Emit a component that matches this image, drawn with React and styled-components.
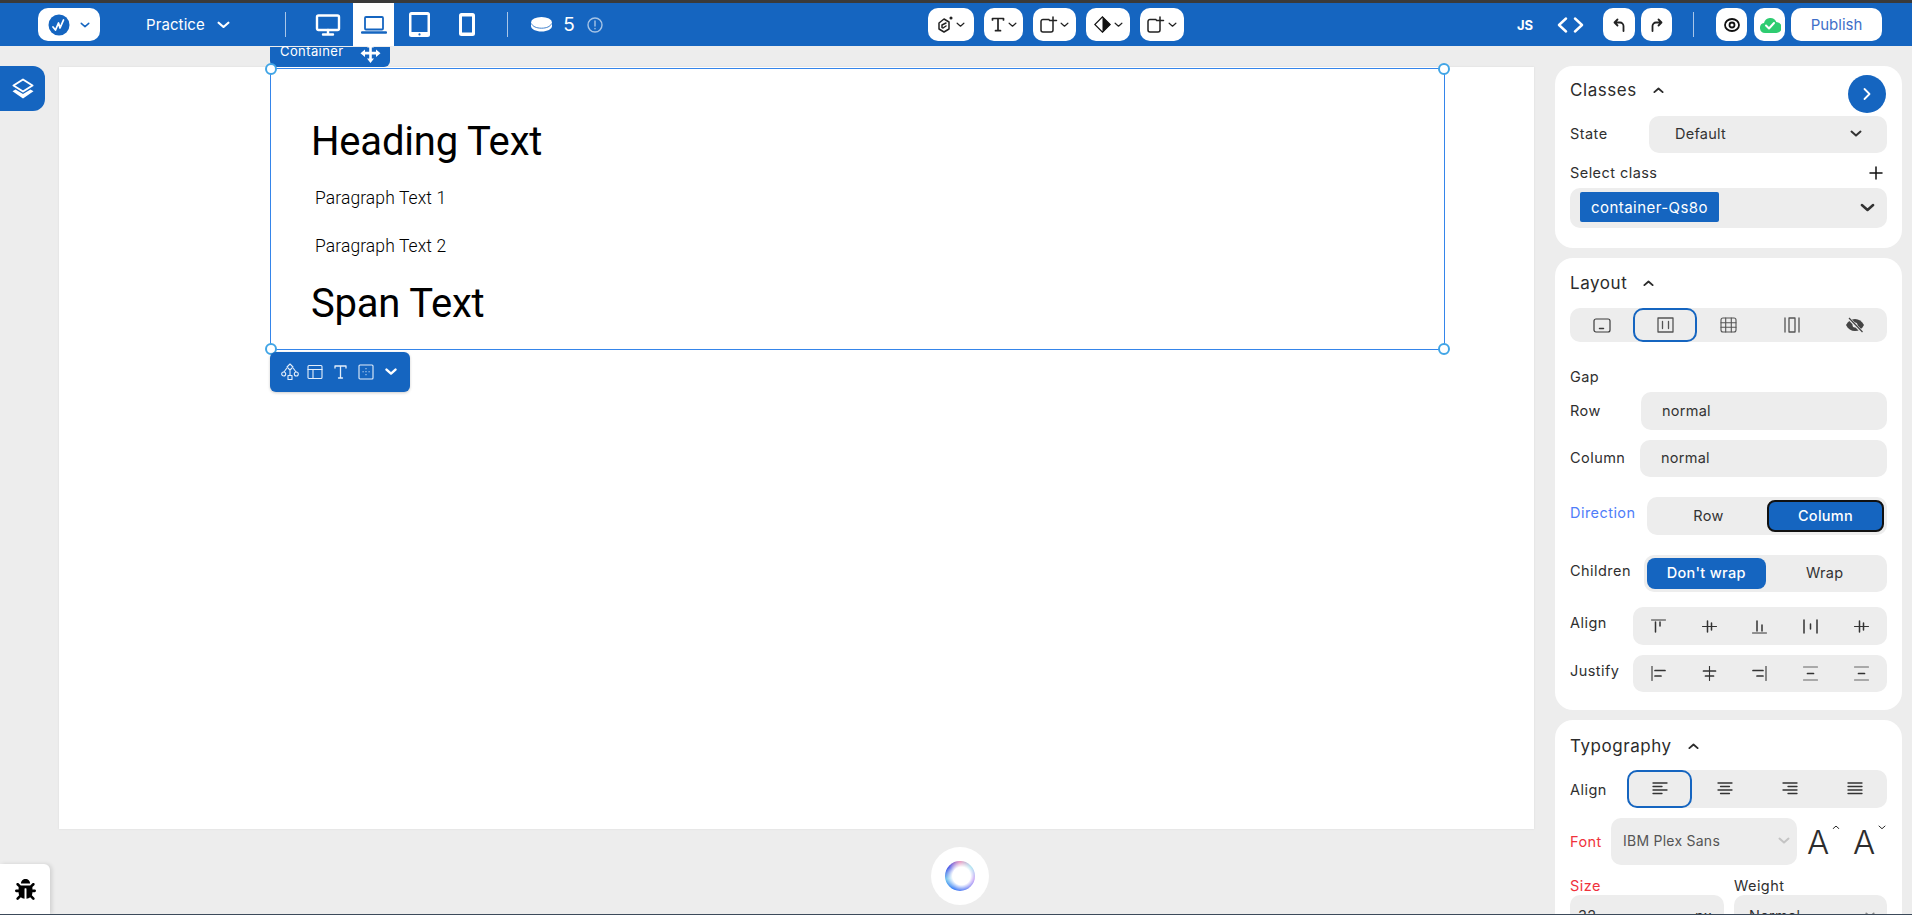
import React from 'react';
import styled, { createGlobalStyle } from 'styled-components';
import { FaBug } from 'react-icons/fa';

const BLUE = '#1565c0';
const UI = '"Inter", "Noto Sans", sans-serif';
const PLEX = '"Roboto", "Noto Sans", sans-serif';

const Global = createGlobalStyle`
  html, body { margin: 0; padding: 0; background: #ededed; overflow: hidden; height: 915px; }
  * { box-sizing: border-box; }
`;

const Page = styled.div`
  width: 1912px; height: 915px; overflow: hidden; position: relative;
  display: flex; flex-direction: column;
  background: #ededed; font-family: ${UI}; color: #2b2b2b;
  border-top: 3px solid #3a3a3a; border-bottom: 1px solid #3c4a5a;
`;
const TopBar = styled.header`
  height: 43px; flex: none; background: ${BLUE}; display: flex; align-items: center;
  padding-left: 38px; position: relative; z-index: 2;
`;
const Spot = styled.div`
  margin-left: ${p => p.$ml || 0}px; flex: none; display: flex; align-items: center; justify-content: center;
  width: ${p => p.$w}px; height: ${p => p.$h || 33}px; gap: ${p => p.$gap || 0}px;
  background: ${p => p.$plain ? 'transparent' : '#fff'};
  border-radius: ${p => p.$plain ? 0 : 10}px;
  color: ${p => p.$plain ? '#fff' : '#1c1c1c'};
`;
const PracticeMenu = styled(Spot)`
  justify-content: flex-start;
`;
const DeviceActive = styled.div`
  margin-left: ${p => p.$ml}px; width: 41px; height: 43px; background: #fff; flex: none;
  display: flex; align-items: center; justify-content: center;
`;
const Divider = styled.div`
  width: 1px; height: 25px; background: #a9c6e8; flex: none; margin-left: ${p => p.$ml}px;
`;
const BarText = styled.span`
  font-size: ${p => p.$s || 15}px; font-weight: ${p => p.$w || 400}; color: #fff; white-space: nowrap;
  letter-spacing: ${p => p.$ls || 0}px;
`;
const PublishButton = styled.button`
  margin-left: 6px; width: 91px; height: 33px; border: 0; border-radius: 10px; background: #fff;
  color: #3f6fc9; font: 400 15px ${UI}; padding: 0; flex: none;
`;

const Main = styled.main`
  flex: 1; min-height: 0; display: flex; position: relative;
`;
const Rail = styled.div`
  width: 59px; flex: none; padding-top: 20px; display: flex; flex-direction: column;
`;
const LayersButton = styled.button`
  width: 45px; height: 45px; border: 0; padding: 0; background: ${BLUE}; border-radius: 0 12px 12px 0;
  display: flex; align-items: center; justify-content: center;
`;
const BugButton = styled.div`
  position: absolute; left: 0; bottom: 0; width: 50px; height: 50px; background: #fff;
  border-radius: 0 6px 0 0; display: flex; align-items: center; justify-content: center;
  box-shadow: 2px 0 4px rgba(0,0,0,.12); color: #000; font-size: 21px;
`;
const Stage = styled.div`
  width: 1475px; flex: none; padding-top: 21px;
`;
const Canvas = styled.section`
  height: 762px; background: #fff; padding: 1px 0 0 211px; box-shadow: 0 0 2px rgba(0,0,0,.08);
`;
const Selection = styled.div`
  width: 1175px; height: 282px; border: 1px solid #3585ea; position: relative;
  padding: 47px 0 0 40px; color: #000; font-family: ${PLEX};
`;
const Heading = styled.div`
  font-size: 40px; line-height: 52px; letter-spacing: -.2px; white-space: nowrap;
  margin-top: ${p => p.$mt || 0}px;
`;
const Para = styled.p`
  margin: ${p => p.$mt}px 0 0 4px; font-size: 17.5px; font-weight: 300; letter-spacing: .1px; line-height: 24px; white-space: nowrap; color: #000;
`;
const Handle = styled.span`
  position: absolute; width: 12px; height: 12px; border-radius: 50%; background: #fff;
  border: 2px solid #41a5e6;
  ${p => p.$r ? 'right: -6px;' : 'left: -6px;'}
  ${p => p.$b ? 'bottom: -6px;' : 'top: -6px;'}
`;
const NameTag = styled.div`
  position: absolute; left: -1px; top: -22px; width: 120px; height: 20px; background: ${BLUE};
  border-radius: 0 0 6px 6px; display: flex; align-items: center; justify-content: space-between;
  padding: 0 9px 8px 10px; color: #fff; font: 400 13px ${UI}; letter-spacing: .4px;
`;
const TagText = styled.span`
  margin-top: -4px;
`;
const ElementBar = styled.div`
  position: absolute; left: -1px; top: 283px; width: 140px; height: 40px; background: ${BLUE};
  border-radius: 6px; display: flex; align-items: center; gap: 11px; padding-left: 11px;
  box-shadow: 0 1px 3px rgba(0,0,0,.2);
`;
const TreeSlot = styled.span`
  display: flex; margin-right: -3px;
`;
const BarChevron = styled.span`
  color: #fff; display: flex;
`;
const Orb = styled.div`
  position: absolute; left: 931px; bottom: 9px; width: 58px; height: 58px; border-radius: 50%; background: #fff;
  display: flex; align-items: center; justify-content: center;
  &::after {
    content: ''; width: 30px; height: 30px; border-radius: 50%;
    background: radial-gradient(circle at 55% 50%, #fff 0 40%, rgba(255,255,255,0) 72%),
      conic-gradient(#e27fb0, #7fd6ea, #a86ff0, #3f5ff0, #1f6cf5, #6fc2ee, #3d4be6, #e27fb0);
    filter: blur(.5px);
  }
`;

const Panel = styled.aside`
  margin-left: 21px; width: 347px; flex: none; padding-top: 20px; display: flex; flex-direction: column; gap: 10px;
`;
const Card = styled.div`
  background: #fff; border-radius: 18px; padding: ${p => p.$pt}px 15px ${p => p.$pb || 0}px; position: relative; flex: none;
`;
const Title = styled.div`
  height: 30px; display: flex; align-items: center; gap: ${p => p.$gap}px;
  font-size: 17px; font-weight: 400; color: #2c2c2c; letter-spacing: .55px;
`;
const NextButton = styled.div`
  position: absolute; right: 16px; top: 9px; width: 38px; height: 38px; border-radius: 50%; background: ${BLUE};
  display: flex; align-items: center; justify-content: center;
`;
const Row = styled.div`
  display: flex; align-items: center; justify-content: space-between;
  margin-top: ${p => p.$mt}px; height: ${p => p.$h}px;
`;
const Label = styled.span`
  font-size: 14.5px; letter-spacing: .45px; white-space: nowrap; color: ${p => p.$c || '#2f2f2f'};
  padding-bottom: ${p => p.$pb ?? 2}px;
`;
const Field = styled.div`
  width: ${p => p.$w ? p.$w + 'px' : '100%'}; height: 100%; background: #ededed; border-radius: 10px; flex: none;
  display: flex; align-items: center; justify-content: space-between;
  padding: 0 ${p => p.$pr ?? 21}px 2px ${p => p.$pl ?? 21}px; font-size: ${p => p.$fs || 14.5}px; letter-spacing: .25px; color: ${p => p.$c || '#333'};
`;
const ClassTag = styled.span`
  height: 30px; width: 139px; background: ${BLUE}; color: #fff; border-radius: 2px; font-size: 15px; letter-spacing: .45px;
  display: flex; align-items: center; justify-content: center; flex: none;
`;
const Segment = styled.div`
  width: ${p => p.$w ? p.$w + 'px' : '100%'}; height: 100%; background: #ededed; border-radius: 10px; flex: none;
  display: grid; grid-template-columns: repeat(${p => p.$n}, 1fr); align-items: center; justify-items: center;
  padding: ${p => p.$pad || 0}px;
`;
const IconCell = styled.div`
  width: 100%; height: 100%; display: flex; align-items: center; justify-content: center;
  border-radius: 10px; color: #3a3a3a;
  border: ${p => p.$on ? `2px solid ${BLUE}` : '0'};
`;
const Toggle = styled.div`
  width: 100%; height: 100%; display: flex; align-items: center; justify-content: center; font-size: 14.5px;
  letter-spacing: .3px; padding-bottom: 2px;
  border-radius: 8px; color: ${p => p.$on ? '#fff' : '#333'}; font-weight: ${p => p.$on ? 500 : 400};
  background: ${p => p.$on ? BLUE : 'transparent'};
  border: ${p => p.$ring ? '2px solid #111' : '0'};
`;
const SizeStep = styled.span`
  width: 31px; flex: none; display: flex; align-items: flex-start; gap: 3px; font-size: 33px; line-height: 38px; color: #2d2d2d; font-weight: 300;
`;
const CaretSlot = styled.span`
  display: flex; margin-top: 2px;
`;
const FontGroup = styled.div`
  display: flex; gap: 15px; margin: 0 3px 0 10px;
`;
const FontLabelGap = styled.span`
  flex: 1;
`;
const Two = styled.div`
  display: grid; grid-template-columns: 154px 153px; column-gap: 10px; margin-top: ${p => p.$mt || 0}px;
  height: ${p => p.$h}px; align-items: center;
`;
const PlusSlot = styled.span`
  display: flex; margin-right: 4px;
`;

const S = ({ w, h, vb, sw = 1.6, children, fill = 'none', c = 'currentColor' }) => (
  <svg width={w} height={h || w} viewBox={vb || `0 0 ${w} ${h || w}`} fill={fill} stroke={c} strokeWidth={sw} strokeLinecap="round" strokeLinejoin="round">{children}</svg>
);
const Chev = ({ up, w = 12, c = 'currentColor', sw = 2 }) => (
  <S w={w} h={w * .6} vb="0 0 12 7" sw={sw} c={c}><path d={up ? 'M1.5 5.5 6 1.5l4.5 4' : 'M1.5 1.5 6 5.5l4.5-4'} /></S>
);

const Monitor = () => <S w={26} h={22} sw={2.4} c="#fff"><rect x="2" y="1.5" width="22" height="14.5" rx="1.5" /><path d="M13 16v4M8 20.5h10" /></S>;
const Laptop = () => <S w={26} h={20} sw={1.8} c={BLUE}><rect x="4" y="2" width="18" height="12.5" rx="1" /><path d="M1 17.5h24" strokeWidth="2.4" /></S>;
const Tablet = () => <svg width="21" height="25" viewBox="0 0 21 25"><rect width="21" height="25" rx="2.5" fill="#fff" /><rect x="2.5" y="3" width="16" height="17" fill={BLUE} /><circle cx="10.5" cy="22.4" r="1.1" fill={BLUE} /></svg>;
const Phone = () => <svg width="16" height="23" viewBox="0 0 16 23"><rect width="16" height="23" rx="2.5" fill="#fff" /><rect x="3" y="3.5" width="10" height="16" fill={BLUE} /></svg>;
const Disk = () => <svg width="21" height="15" viewBox="0 0 21 15"><path d="M0 6v3c0 3 4.700 5.500 10.500 5.500S21 12 21 9V6z" fill="#fff" /><ellipse cx="10.500" cy="5.500" rx="10.500" ry="5.500" fill="#fff" /><path d="M.5 6.500c1 3 5 4.700 10 4.700s9-1.700 10-4.700" fill="none" stroke={BLUE} strokeWidth=".8" /></svg>;
const Info = () => <S w={16} sw={1.4} c="#a6c4e6"><circle cx="8" cy="8" r="7" /><path d="M8 4v5M8 11.500v.3" /></S>;

const Logo = () => (
  <svg width="22" height="22" viewBox="0 0 22 22"><circle cx="11" cy="11" r="10.500" fill={BLUE} /><path d="M5 13l2.500 3 3-7 1.500 5 3.500-8" fill="none" stroke="#fff" strokeWidth="1.800" strokeLinecap="round" strokeLinejoin="round" /></svg>
);
const Hex = () => <S w={16} h={17} sw={1.5} c="#222"><path d="M7 3l5 3v7l-5 3-5-3V7z" /><path d="M9 7L5 9v2.500M9 10l-3 2" /><circle cx="14" cy="2" r=".8" fill="#222" /></S>;
const TIcon = () => <S w={14} h={15} sw={1.7} c="#222"><path d="M1.500 3V1.500h11V3M7 1.500v12M4.500 13.700h5" /></S>;
const BoxPlus = () => <S w={18} h={17} sw={1.5} c="#222"><path d="M9 3.500H3a2 2 0 0 0-2 2V14a2 2 0 0 0 2 2h8a2 2 0 0 0 2-2V8M13 1v7M9.500 4.500h7" /></S>;
const Diamond = () => <svg width="17" height="17" viewBox="0 0 17 17"><path d="M8.500.8 16.200 8.500 8.500 16.200.8 8.500z" fill="#fff" stroke="#111" strokeWidth="1.200" /><path d="M8.500.8 16.200 8.500 8.500 16.200z" fill="#111" /></svg>;
const Undo = () => <S w={12} h={14} sw={1.800} c="#222"><path d="M4.500 1.500 1.500 4.500l3 3M1.500 4.500H7a3.500 3.500 0 0 1 3.500 3.500V13" /></S>;
const Redo = () => <S w={12} h={14} sw={1.800} c="#222"><path d="M7.500 1.500l3 3-3 3M10.500 4.500H5A3.500 3.500 0 0 0 1.500 8V13" /></S>;
const Eye = () => <svg width="16" height="14" viewBox="0 0 16 14" fill="none" stroke="#111"><ellipse cx="8" cy="7" rx="7" ry="6" strokeWidth="1.800" /><circle cx="8" cy="7" r="2.500" strokeWidth="1.800" /></svg>;
const Cloud = () => <svg width="22" height="16" viewBox="0 0 22 16"><path d="M6 16a5 5 0 0 1-1-9.900A6.500 6.500 0 0 1 17.300 5 5.500 5.500 0 0 1 17 16z" fill="#2ecc71" /><path d="M7 8.500l3 3 5-5.500" fill="none" stroke="#fff" strokeWidth="2" strokeLinecap="round" strokeLinejoin="round" /></svg>;
const Code = () => <S w={27} h={16} sw={2.400} c="#fff"><path d="M9 1.500 2 8l7 6.500M18 1.500 25 8l-7 6.500" /></S>;
const Layers = () => <svg width="22" height="21" viewBox="0 0 22 21"><path d="M11 1.500 20.500 7.500 11 13.500 1.500 7.500z" fill="none" stroke="#fff" strokeWidth="2" strokeLinejoin="round" /><path d="M3.500 11.500 11 16l7.500-4.500 3 1.800L11 20.500.5 13.300z" fill="#fff" /></svg>;
const Move = () => <svg width="21" height="19" viewBox="0 0 21 19" fill="#fff"><path d="M10.500 0l3.500 3.500h-2.200v4.200H16V5.500l4.500 3.700L16 13v-2.500h-4.200v4h2.200l-3.500 4.500L7 14.500h2.200v-4H5V13L.5 9.200 5 5.500v2.200h4.200V3.500H7z" /></svg>;
const Tree = () => <S w={18} h={18} sw={1.100} c="#e3eefa"><path d="M9 1l3 3-3 3-3-3zM5.500 5.500 3 9M12.500 5.500 15 9M9 7v5" /><circle cx="2.700" cy="11" r="2" /><circle cx="15.300" cy="11" r="2" /><rect x="7" y="12.500" width="4" height="4" /></S>;
const Panelish = () => <S w={16} sw={1.100} c="#e3eefa"><rect x="1" y="1.500" width="14" height="13" rx="1" /><path d="M1 5.500h14M6 5.500v9" /></S>;
const SerifT = () => <S w={13} h={14} sw={1.300} c="#e3eefa"><path d="M1 3V1h11v2M6.500 1v12M4.500 13h4" /></S>;
const DotBox = () => <S w={16} sw={1.100} c="#e3eefa"><rect x="1" y="1" width="14" height="14" rx="1" /><path d="M8 4.500v.2M8 7.500v.2M8 10.500v.2M5 7.800h.2M11 7.800h.2" /></S>;

const LIcon = ({ k }) => {
  const m = {
    block: <S w={18} h={15} sw={1.200}><rect x="1" y="1" width="16" height="13" rx="2" /><path d="M6.500 10.500h4" strokeWidth="1.500" /></S>,
    flex: <S w={17} h={16} sw={1.300} c="#555"><rect x="1" y="1" width="15" height="14" /><path d="M5.500 4.500v7M11.500 4.500v7" /></S>,
    grid: <S w={17} h={16} sw={1.100} c="#555"><rect x="1" y="1" width="15" height="14" rx="2" /><path d="M1 5.700h15M1 10.300h15M5.700 1v14M11.300 1v14" /></S>,
    column: <S w={16} h={16} sw={1.300} c="#555"><path d="M1 1v14M15 1v14" /><rect x="5" y="1" width="6" height="14" /></S>,
    hide: <svg width="20" height="16" viewBox="0 0 20 16"><path d="M1 8c2-4 5.200-6 9-6s7 2 9 6c-2 4-5.200 6-9 6s-7-2-9-6z" fill="#444" /><circle cx="10" cy="8" r="2.500" fill="#ededed" /><path d="M3.500 1 17 15" stroke="#ededed" strokeWidth="3" /><path d="M4 1l13.500 14" stroke="#444" strokeWidth="1.200" /></svg>,
  };
  return m[k];
};
const Tt = ({ children, sw = 1.500 }) => <S w={15} sw={sw} c="#333">{children}</S>;
const alignIcons = [
  <Tt><path d="M.5 1h14" strokeWidth="1" /><path d="M4.500 3v10M9 3v4" /></Tt>,
  <Tt><path d="M.5 7.500h14" strokeWidth="1.100" /><path d="M5.500 2v11M9.500 4v7" /></Tt>,
  <Tt><path d="M.5 14h14" strokeWidth="1" /><path d="M5 2v10M10 6v6" /></Tt>,
  <Tt><path d="M1 1v13M14 1v13M7.500 5v5" /></Tt>,
  <Tt><path d="M.5 7.500h14" strokeWidth="1.100" /><path d="M5.500 2v11M9.500 4v7" /></Tt>,
];
const justifyIcons = [
  <Tt><path d="M1 .5v14" strokeWidth="1.100" /><path d="M4 4.500h10M4 10h6" strokeWidth="1.700" /></Tt>,
  <Tt><path d="M7.500 .5v14" strokeWidth="1.100" /><path d="M1.500 5h12M3.500 10h8" strokeWidth="1.700" /></Tt>,
  <Tt><path d="M14 .5v14" strokeWidth="1.100" /><path d="M1 4.500h10M5 10h6" strokeWidth="1.700" /></Tt>,
  <Tt><path d="M.5 1h14M.5 14h14" strokeWidth="1.100" stroke="#666" /><path d="M4.500 7.500h6" strokeWidth="1.700" /></Tt>,
  <Tt><path d="M.5 1h14M.5 14h14" strokeWidth="1.100" stroke="#666" /><path d="M4.500 7.500h6" strokeWidth="1.700" /></Tt>,
];
const TextAlign = ({ d }) => <S w={16} h={14} sw={1.300} c="#333"><path d={d} /></S>;
const tAligns = [
  'M1 1h14M1 4.500h9M1 8h14M1 11.500h9',
  'M1 1h14M3.500 4.500h9M1 8h14M3.500 11.500h9',
  'M1 1h14M6 4.500h9M1 8h14M6 11.500h9',
  'M1 1h14M1 4.500h14M1 8h14M1 11.500h14',
];

export default function App() {
  return (
    <Page>
      <Global />
      <TopBar>
        <Spot $w={62} $gap={10}><Logo /><Chev w={10} c={BLUE} sw={1.800} /></Spot>
        <PracticeMenu $plain $ml={46} $w={84} $gap={12}><BarText $ls={.1}>Practice</BarText><Chev w={13} c="#fff" /></PracticeMenu>
        <Divider $ml={55} />
        <Spot $plain $ml={29} $w={26}><Monitor /></Spot>
        <DeviceActive $ml={12}><Laptop /></DeviceActive>
        <Spot $plain $ml={15} $w={21}><Tablet /></Spot>
        <Spot $plain $ml={29} $w={16}><Phone /></Spot>
        <Divider $ml={32} />
        <Spot $plain $ml={23} $w={21}><Disk /></Spot>
        <Spot $plain $ml={11} $w={12}><BarText $s={19}>5</BarText></Spot>
        <Spot $plain $ml={12} $w={16}><Info /></Spot>
        <Spot $ml={325} $w={46} $gap={3}><Hex /><Chev w={9} c="#222" sw={1.600} /></Spot>
        <Spot $ml={10} $w={39} $gap={3}><TIcon /><Chev w={9} c="#222" sw={1.600} /></Spot>
        <Spot $ml={10} $w={43} $gap={2}><BoxPlus /><Chev w={9} c="#222" sw={1.600} /></Spot>
        <Spot $ml={10} $w={44} $gap={3}><Diamond /><Chev w={9} c="#222" sw={1.600} /></Spot>
        <Spot $ml={10} $w={44} $gap={3}><BoxPlus /><Chev w={9} c="#222" sw={1.600} /></Spot>
        <Spot $plain $ml={332} $w={18}><BarText $s={13} $w={700}>JS</BarText></Spot>
        <Spot $plain $ml={23} $w={27}><Code /></Spot>
        <Spot $ml={19} $w={32}><Undo /></Spot>
        <Spot $ml={6} $w={31}><Redo /></Spot>
        <Divider $ml={21} />
        <Spot $ml={22} $w={31}><Eye /></Spot>
        <Spot $ml={7} $w={31}><Cloud /></Spot>
        <PublishButton>Publish</PublishButton>
      </TopBar>

      <Main>
        <Rail><LayersButton aria-label="Layers"><Layers /></LayersButton></Rail>
        <Stage>
          <Canvas>
            <Selection>
              <NameTag><TagText>Container</TagText><Move /></NameTag>
              <Handle /><Handle $r /><Handle $b /><Handle $r $b />
              <Heading>Heading Text</Heading>
              <Para $mt={18}>Paragraph Text 1</Para>
              <Para $mt={24}>Paragraph Text 2</Para>
              <Heading $mt={20}>Span Text</Heading>
              <ElementBar>
                <TreeSlot><Tree /></TreeSlot><Panelish /><SerifT /><DotBox />
                <BarChevron><Chev w={12} sw={2.400} /></BarChevron>
              </ElementBar>
            </Selection>
          </Canvas>
        </Stage>
        <Panel>
          <Card $pt={9} $pb={20}>
            <Title $gap={16}>Classes<Chev up w={11} /></Title>
            <NextButton><S w={10} h={14} sw={1.800} c="#fff"><path d="M2.500 2 7.500 7l-5 5" /></S></NextButton>
            <Row $mt={11} $h={37}>
              <Label>State</Label>
              <Field $w={238} $pl={26} $pr={25}>Default<Chev w={12} /></Field>
            </Row>
            <Row $mt={7} $h={26}>
              <Label>Select class</Label>
              <PlusSlot><S w={14} sw={1.500} c="#111"><path d="M7 1v12M1 7h12" /></S></PlusSlot>
            </Row>
            <Row $mt={2} $h={40}>
              <Field $pl={10} $pr={12}><ClassTag>container-Qs8o</ClassTag><Chev w={15} /></Field>
            </Row>
          </Card>

          <Card $pt={10} $pb={18}>
            <Title $gap={16}>Layout<Chev up w={11} /></Title>
            <Row $mt={10} $h={34}>
              <Segment $n={5}>
                <IconCell><LIcon k="block" /></IconCell>
                <IconCell $on><LIcon k="flex" /></IconCell>
                <IconCell><LIcon k="grid" /></IconCell>
                <IconCell><LIcon k="column" /></IconCell>
                <IconCell><LIcon k="hide" /></IconCell>
              </Segment>
            </Row>
            <Row $mt={25} $h={20}><Label>Gap</Label></Row>
            <Row $mt={5} $h={38}><Label>Row</Label><Field $w={246}>normal</Field></Row>
            <Row $mt={10} $h={37}><Label>Column</Label><Field $w={247}>normal</Field></Row>
            <Row $mt={20} $h={38}>
              <Label $c="#4f7df9" $pb={7}>Direction</Label>
              <Segment $w={240} $n={2} $pad={3}><Toggle>Row</Toggle><Toggle $on $ring>Column</Toggle></Segment>
            </Row>
            <Row $mt={20} $h={37}>
              <Label $pb={7}>Children</Label>
              <Segment $w={243} $n={2} $pad={3}><Toggle $on>Don't wrap</Toggle><Toggle>Wrap</Toggle></Segment>
            </Row>
            <Row $mt={15} $h={38}>
              <Label $pb={7}>Align</Label>
              <Segment $w={254} $n={5}>{alignIcons.map((x, i) => <IconCell key={i}>{x}</IconCell>)}</Segment>
            </Row>
            <Row $mt={10} $h={37}>
              <Label $pb={7}>Justify</Label>
              <Segment $w={254} $n={5}>{justifyIcons.map((x, i) => <IconCell key={i}>{x}</IconCell>)}</Segment>
            </Row>
          </Card>

          <Card $pt={11} $pb={60}>
            <Title $gap={16}>Typography<Chev up w={11} /></Title>
            <Row $mt={9} $h={38}>
              <Label $pb={0}>Align</Label>
              <Segment $w={260} $n={4}>
                {tAligns.map((d, i) => <IconCell key={i} $on={i === 0}><TextAlign d={d} /></IconCell>)}
              </Segment>
            </Row>
            <Row $mt={10} $h={47}>
              <Label $c="#f0323c" $pb={0}>Font</Label>
              <FontLabelGap />
              <Field $w={186} $pl={12} $pr={7} $c="#555" $fs={14}>IBM Plex Sans<Chev w={12} c="#c4c4c4" /></Field>
              <FontGroup>
                <SizeStep>A<CaretSlot><Chev up w={8} sw={1.500} /></CaretSlot></SizeStep>
                <SizeStep>A<CaretSlot><Chev w={8} sw={1.500} /></CaretSlot></SizeStep>
              </FontGroup>
            </Row>
            <Two $mt={10} $h={20}><Label $c="#f0323c" $pb={0}>Size</Label><Label $pb={0}>Weight</Label></Two>
            <Two $h={42}>
              <Field $pl={8} $pr={12}>32<span>px</span></Field>
              <Field $pl={15} $pr={12}>Normal<Chev w={10} c="#888" /></Field>
            </Two>
          </Card>
        </Panel>
        <BugButton><FaBug /></BugButton>
        <Orb />
      </Main>
    </Page>
  );
}
